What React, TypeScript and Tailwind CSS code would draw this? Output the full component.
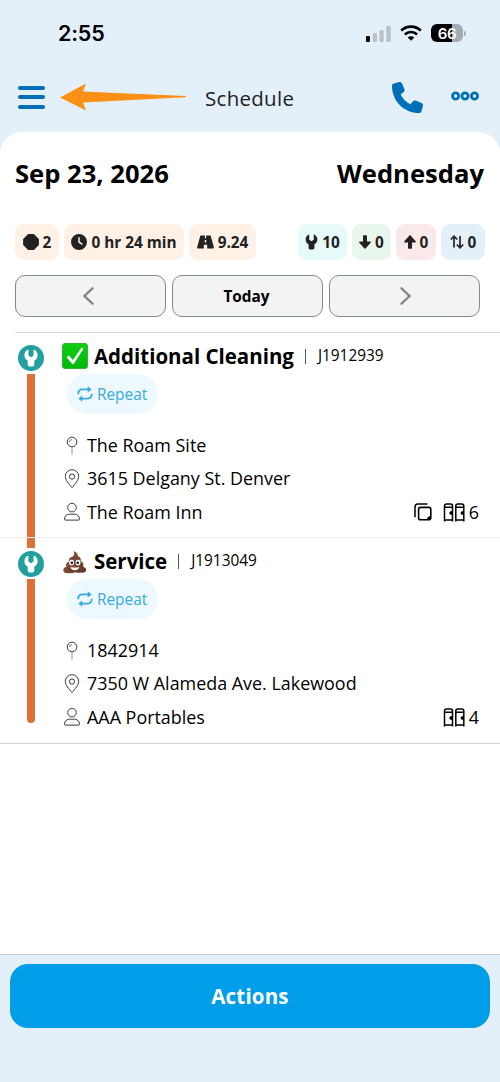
import React from "react";
import { FaPhone, FaClock } from "react-icons/fa6";

const Wrench = ({ className }: { className: string }) => (
  <svg viewBox="0 0 14 18" className={className} fill="currentColor">
    <path d="M3.500.8C1.500 2 .4 4 .4 6.200c0 2.400 1.200 4.300 3.300 5.400v4c0 1.100.8 1.900 1.900 1.900h2.800c1.100 0 1.900-.8 1.900-1.900v-4c2.100-1.100 3.300-3 3.300-5.400 0-2.200-1.100-4.200-3.100-5.400-.5-.3-1 0-1 .5l.1 5.200L7 8.200 4.400 6.500l.1-5.200c0-.5-.5-.8-1-.5z" />
  </svg>
);

const Road = () => (
  <svg viewBox="0 0 17 14" className="h-[14px] w-[17px]" fill="currentColor">
    <path d="M4.200.4h3.700v2.800h1.200V.4h3.700c.5 0 .8.2 1 .7l3 11c.2.9-.2 1.500-1.100 1.500H10.200V9.800H6.800v3.800H1.300c-.9 0-1.300-.6-1.100-1.500l3-11c.2-.5.5-.7 1-.7zM7.700 5v2.600h1.600V5z" fillRule="evenodd" />
  </svg>
);

const FatArrow = ({ className }: { className: string }) => (
  <svg viewBox="0 0 12 14" className={className} fill="currentColor">
    <path d="M4 1.200c0-.6.400-1 1-1h2c.6 0 1 .4 1 1v5.200h3c.9 0 1.200.8.7 1.400l-4.900 5.500c-.4.500-1.200.5-1.600 0L.3 7.800C-.2 7.200.1 6.400 1 6.400h3z" />
  </svg>
);

const Badge = ({ className, children }: { className: string; children: React.ReactNode }) => (
  <div className={`flex h-9 items-center justify-center rounded-[9px] text-[15.36px] font-bold text-[#222] [&>span]:pt-0.5 ${className}`}>
    {children}
  </div>
);

const Check = () => (
  <svg viewBox="0 0 26 26" className="h-[26px] w-[26px]">
    <defs>
      <linearGradient id="ck" x1="0" y1="0" x2="0" y2="1">
        <stop offset="0" stopColor="#0fce12" />
        <stop offset="1" stopColor="#00b80b" />
      </linearGradient>
    </defs>
    <rect x=".5" y=".5" width="25" height="25" rx="2.500" fill="url(#ck)" stroke="#35b239" />
    <path d="M4.600 14.200 6.800 12.300 10.800 17 19.600 4.600 21.600 5.500 11.600 21.300h-1.100z" fill="#fff" />
  </svg>
);

const Poop = () => (
  <svg viewBox="0 0 26 26" className="mt-0.5 h-[26px] w-[26px]">
    <defs>
      <linearGradient id="pp" x1="0" y1="0" x2="1" y2="1">
        <stop offset="0" stopColor="#95614a" />
        <stop offset="1" stopColor="#5e3323" />
      </linearGradient>
    </defs>
    <path
      d="M11.600 2.200c3 .6 4.700 2.500 4 4.900 2.700.8 3.800 2.800 3 5 2.500.8 3.500 3.300 2.500 5.600 2.600.6 3.600 2.500 2.800 4.300-.8 1.700-2.700 2-4.800 1.500-2 .5-3.900.4-5.500-.2-2.800.9-6.500 1.300-9.600.6-2.500-.5-3.200-2.200-2.400-4 .5-1.100 1.500-1.700 2.700-1.800-.8-2.500.3-5 2.700-5.600-.5-2.300.5-3.900 2.700-4.500 2-.6 3.200-2.900 1.900-5.800z"
      fill="url(#pp)"
    />
    <path d="M8 9.200c2.200.6 5.200 0 7-1.500M7 13c3 .8 8 .6 11-.6M5 19.500c1.500 1.300 3 1.500 4.500 1.500" stroke="#55301f" strokeWidth=".7" fill="none" />
    <ellipse cx="9.600" cy="13.600" rx="2.500" ry="2.900" fill="#fff" />
    <ellipse cx="16" cy="13.600" rx="2.500" ry="2.900" fill="#fff" />
    <circle cx="9.900" cy="13.800" r="1.350" fill="#222" />
    <circle cx="15.700" cy="13.800" r="1.350" fill="#222" />
    <path d="M8.300 17.900c2.800.8 6.200.8 9 0-.7 2.200-2.400 3.300-4.500 3.300s-3.800-1.100-4.500-3.300z" fill="#fff" />
  </svg>
);

const Repeat = () => (
  <svg viewBox="0 0 16 16" className="h-4 w-4" fill="none" stroke="currentColor" strokeWidth="1.800">
    <path d="M1.200 8.200C1.200 4.800 2.500 3.400 5.500 3.400H11.500" />
    <path d="M14.800 7.800C14.800 11.200 13.500 12.600 10.500 12.600H4.500" />
    <path d="M10.700.2 14.700 3.400 10.700 6.600zM5.300 9.400 1.300 12.600 5.300 15.800z" fill="currentColor" stroke="none" />
  </svg>
);

const Pin = () => (
  <svg viewBox="0 0 16 20" className="h-5 w-4" fill="none" stroke="#333">
    <circle cx="8" cy="6" r="4.800" strokeWidth=".95" />
    <path d="M5.500 6Q5.600 3.700 7.900 3.600" strokeWidth=".7" />
    <path d="M8 11v7.500" strokeWidth=".8" stroke="#777" />
  </svg>
);

const Marker = () => (
  <svg viewBox="0 0 16 20" className="h-5 w-4" fill="none" stroke="#333" strokeWidth=".95">
    <path d="M8 18.600C5 15 1.300 11 1.300 7.400a6.700 6.700 0 0 1 13.400 0C14.700 11 11 15 8 18.600z" />
    <circle cx="8" cy="7.600" r="2.600" />
  </svg>
);

const Person = () => (
  <svg viewBox="0 0 16 20" className="h-5 w-4" fill="none" stroke="#333" strokeWidth=".95">
    <circle cx="8" cy="5.600" r="4.300" />
    <path d="M.5 17.200c0-3 2.200-5 5-5h5c2.800 0 5 2 5 5 0 .6-.3.900-.9.900H1.400c-.6 0-.9-.3-.9-.9z" />
  </svg>
);

const Copy = () => (
  <svg viewBox="0 0 18 18" className="h-[18px] w-[18px]" fill="none" stroke="#000">
    <rect x="4.600" y="4.400" width="12.200" height="12.400" rx="2" strokeWidth="1.600" />
    <path d="M1 14.200V4Q1 1.100 3.900 1.100H13.400" strokeWidth="1.500" />
    <path d="M13 17q0-4 4-4v2q0 2-2 2z" fill="#000" stroke="none" />
  </svg>
);

const Units = () => (
  <svg viewBox="0 0 22 19" className="h-[19px] w-[22px]" fill="none" stroke="#000" strokeWidth="1.500">
    <path d="M1.500 18.500V3Q1.500 1.100 3.500 1.100H7.500Q9.500 1.100 9.500 3V18.500M1 4.300H9.500M1 16.900H10" />
    <path d="M12.800 18.500V3Q12.800 1.100 14.800 1.100H18.800Q20.800 1.100 20.800 3V18.500M12.500 4.300H21M12.300 16.900H21.300" />
    <path d="M9.500 8Q6.300 8.200 6.300 9.900T9.500 12zM20.800 8Q17.600 8.200 17.600 9.900T20.800 12z" fill="#000" stroke="none" />
  </svg>
);

type JobProps = {
  emoji: React.ReactNode;
  title: string;
  id: string;
  site: string;
  address: string;
  customer: string;
  count: string;
  copy?: boolean;
  last?: boolean;
};

const Job = (p: JobProps) => (
  <div className={`flex border-b ${p.last ? "h-[206px] border-[#d2d2d2]" : "h-[205px] border-[#ededed]"}`}>
    <div className="flex w-[62px] shrink-0 flex-col items-start">
      <div className={`ml-[27px] w-2 shrink-0 ${p.last ? "h-[10px] bg-[#dc7037]" : "h-[9px]"}`} />
      <div className={`ml-[18px] flex h-[32px] w-[26px] shrink-0 items-center justify-center ${p.last ? "-mb-px" : ""}`}>
        <div className="flex h-[26px] w-[26px] items-center justify-center rounded-full bg-[#22a09f] text-white">
          <Wrench className="h-[18px] w-[14px]" />
        </div>
      </div>
      <div className={`ml-[27px] w-2 shrink-0 bg-[#dc7037] ${p.last ? "h-[144px] rounded-b-full" : "h-[163px]"}`} />
    </div>
    <div className="flex min-w-0 flex-1 flex-col pr-[21px]">
      <div className="mt-[5px] flex h-9 items-center">
        {p.emoji}
        <span className="ml-[6px] whitespace-nowrap text-[20.48px] font-bold">{p.title}</span>
        <div className="ml-[11px] h-[15px] w-px bg-[#555]" />
        <span className="ml-[12px] text-[15.36px]">{p.id}</span>
      </div>
      <div className="ml-[5px] flex h-10 w-[91px] items-center gap-[5px] rounded-full bg-[#eef9ff] pl-[10px] text-[15.36px] text-[#35abdf]">
        <Repeat />
        <span className="-ml-px pt-0.5">Repeat</span>
      </div>
      <div className="mt-[15px] flex h-[33px] items-center gap-[7px] pl-[2px] text-[17.92px]">
        <Pin />
        <span className="whitespace-nowrap">{p.site}</span>
      </div>
      <div className="flex h-[33px] items-center gap-[7px] pl-[2px] text-[17.92px]">
        <Marker />
        <span className="whitespace-nowrap">{p.address}</span>
      </div>
      <div className="flex h-[34px] items-center gap-[7px] pl-[2px] text-[17.92px]">
        <Person />
        <span className="whitespace-nowrap">{p.customer}</span>
        <div className="ml-auto flex items-center">
          {p.copy && <div className="mr-[11px]"><Copy /></div>}
          <Units />
          <span className="ml-[4px]">{p.count}</span>
        </div>
      </div>
    </div>
  </div>
);

export default function App() {
  return (
    <div className="flex h-[1082px] w-[500px] flex-col overflow-hidden bg-[#e4f0f9] font-['Open_Sans','Noto_Sans',sans-serif] text-black">
      <div className="flex h-[66px] shrink-0 items-center pl-[58px] pr-[34px]">
        <span className="font-['Inter',sans-serif] text-[21.5px] font-semibold tracking-[-0.2px]">2:55</span>
        <svg viewBox="0 0 26 17" className="ml-auto h-[17px] w-[26px]">
          <rect x="1" y="11" width="4" height="6" rx="1" fill="#000" />
          <rect x="7.800" y="8" width="4.200" height="9" rx="1" fill="#b7c2c9" />
          <rect x="14.500" y="5" width="4.200" height="12" rx="1" fill="#b7c2c9" />
          <rect x="21.300" y="1" width="4.500" height="16" rx="1.200" fill="#b7c2c9" />
        </svg>
        <svg viewBox="0 0 22 16" className="ml-[9px] h-4 w-[22px]" fill="none" stroke="#000" strokeWidth="2.700">
          <path d="M1.200 5.600C6.500.4 15.500.4 20.800 5.600" />
          <path d="M4.900 9.400C8.300 6.200 13.700 6.200 17.100 9.400" />
          <path d="M11 15.700 7.700 12.500C9.500 10.800 12.500 10.800 14.300 12.500z" fill="#000" stroke="none" />
        </svg>
        <div className="ml-[9px] flex h-[18px] w-8 items-center justify-center rounded-[6px] bg-linear-to-r from-black from-67% to-[#a2adb3] to-67% font-['Inter',sans-serif] text-[15px] font-semibold leading-none tracking-[-0.3px] text-white">
          66
        </div>
        <div className="ml-px h-[5px] w-[2px] rounded-r-full bg-[#a2adb3]" />
      </div>
      <div className="flex h-[66px] shrink-0 items-center pl-[18px] pr-[21px]">
        <div className="-mt-1 flex flex-col gap-[5.500px]">
          <div className="h-1 w-[27px] rounded-full bg-[#006fb8]" />
          <div className="h-1 w-[27px] rounded-full bg-[#006fb8]" />
          <div className="h-1 w-[27px] rounded-full bg-[#006fb8]" />
        </div>
        <svg viewBox="0 0 126 28" className="-mt-1 ml-[15px] h-7 w-[126px]" fill="#fb9016">
          <path d="M0 14.500 26 .5 23 8.500 125.500 13q1 .6 0 1.200L23 19.500 26 27.500z" />
        </svg>
        <span className="-mt-0.5 ml-[19px] text-[20.48px] tracking-[0.3px] text-[#222]">Schedule</span>
        <FaPhone className="-mt-1 ml-auto h-[31px] w-[31px] text-[#006fb8]" />
        <svg viewBox="0 0 28 10" className="-mt-1.5 ml-[28px] h-[10px] w-7" fill="none" stroke="#006fb8" strokeWidth="2.700">
          <circle cx="4.600" cy="5" r="3.100" />
          <circle cx="14" cy="5" r="3.100" />
          <circle cx="23.500" cy="5" r="3.100" />
        </svg>
      </div>
      <div className="flex h-[822px] shrink-0 flex-col rounded-t-[22px] bg-white">
        <div className="flex h-[92px] items-center justify-between pb-[7px] pl-[15px] pr-[16px] text-[25.6px] font-bold">
          <span>Sep 23, 2026</span>
          <span>Wednesday</span>
        </div>
        <div className="flex h-9 gap-[5px] pl-[15px] pr-[15px]">
          <Badge className="w-11 gap-[4px] bg-[#fff1e5]">
            <svg viewBox="0 0 16 16" className="h-4 w-4" fill="currentColor">
              <path d="M5.500 1h5L15 5.500v5L10.500 15h-5L1 10.500v-5z" stroke="currentColor" strokeWidth="1.800" strokeLinejoin="round" />
            </svg>
            <span>2</span>
          </Badge>
          <Badge className="w-[120px] gap-[4px] bg-[#fff1e5]">
            <FaClock className="h-4 w-4" />
            <span className="whitespace-nowrap">0 hr 24 min</span>
          </Badge>
          <Badge className="w-[67px] gap-[4px] bg-[#fff1e5]">
            <Road />
            <span>9.24</span>
          </Badge>
          <Badge className="ml-auto w-[49px] gap-[4px] bg-[#e5faf9]">
            <Wrench className="h-4 w-[13px]" />
            <span>10</span>
          </Badge>
          <Badge className="w-[39px] gap-[4px] bg-[#e9f6ec]">
            <FatArrow className="h-[14px] w-3" />
            <span>0</span>
          </Badge>
          <Badge className="w-[40px] gap-[4px] bg-[#fae9eb]">
            <FatArrow className="h-[14px] w-3 rotate-180" />
            <span>0</span>
          </Badge>
          <Badge className="w-[44px] gap-[4px] bg-[#e4f0f9]">
            <svg viewBox="0 0 14 14" className="h-[14px] w-[14px]" fill="none" stroke="currentColor" strokeWidth="1.700">
              <path d="M4 12.500V1.500M.8 4.500 4 1.200 7.200 4.500M10 1v11.500M6.800 9.500 10 12.800 13.200 9.500" />
            </svg>
            <span>0</span>
          </Badge>
        </div>
        <div className="mt-[15px] flex gap-[6px] pl-[15px]">
          <div className="flex h-[42px] w-[151px] items-center justify-center rounded-[10px] border-[1.500px] border-[#828a94] bg-[#f3f3f3]">
            <svg viewBox="0 0 12 18" className="mr-[3px] h-[18px] w-3 text-[#7f8790]" fill="none" stroke="currentColor" strokeWidth="2.300" strokeLinecap="round">
              <path d="M9.500 1.300 1.500 9l8 7.700" />
            </svg>
          </div>
          <div className="flex h-[42px] w-[151px] items-center justify-center rounded-[10px] border-[1.500px] border-[#828a94] bg-[#f3f3f3] pr-0.5 pt-0.5 text-[15.36px] font-bold">
            Today
          </div>
          <div className="flex h-[42px] w-[151px] items-center justify-center rounded-[10px] border-[1.500px] border-[#828a94] bg-[#f3f3f3]">
            <svg viewBox="0 0 12 18" className="h-[18px] w-3 text-[#7f8790]" fill="none" stroke="currentColor" strokeWidth="2.300" strokeLinecap="round">
              <path d="m2.500 1.300 8 7.700-8 7.700" />
            </svg>
          </div>
        </div>
        <div className="ml-[15px] mt-[15px] h-px bg-[#dedede]" />
        <Job
          emoji={<Check />}
          title="Additional Cleaning"
          id="J1912939"
          site="The Roam Site"
          address="3615 Delgany St. Denver"
          customer="The Roam Inn"
          count="6"
          copy
        />
        <Job
          emoji={<Poop />}
          title="Service"
          id="J1913049"
          site="1842914"
          address="7350 W Alameda Ave. Lakewood"
          customer="AAA Portables"
          count="4"
          last
        />
      </div>
      <div className="flex h-[128px] shrink-0 items-start border-t border-[#c3ced6] px-[10px] pt-[9px]">
        <button className="flex h-[64px] w-full items-center justify-center rounded-[18px] bg-[#009de8] text-[20.48px] font-bold tracking-[0.2px] text-white">
          Actions
        </button>
      </div>
    </div>
  );
}
